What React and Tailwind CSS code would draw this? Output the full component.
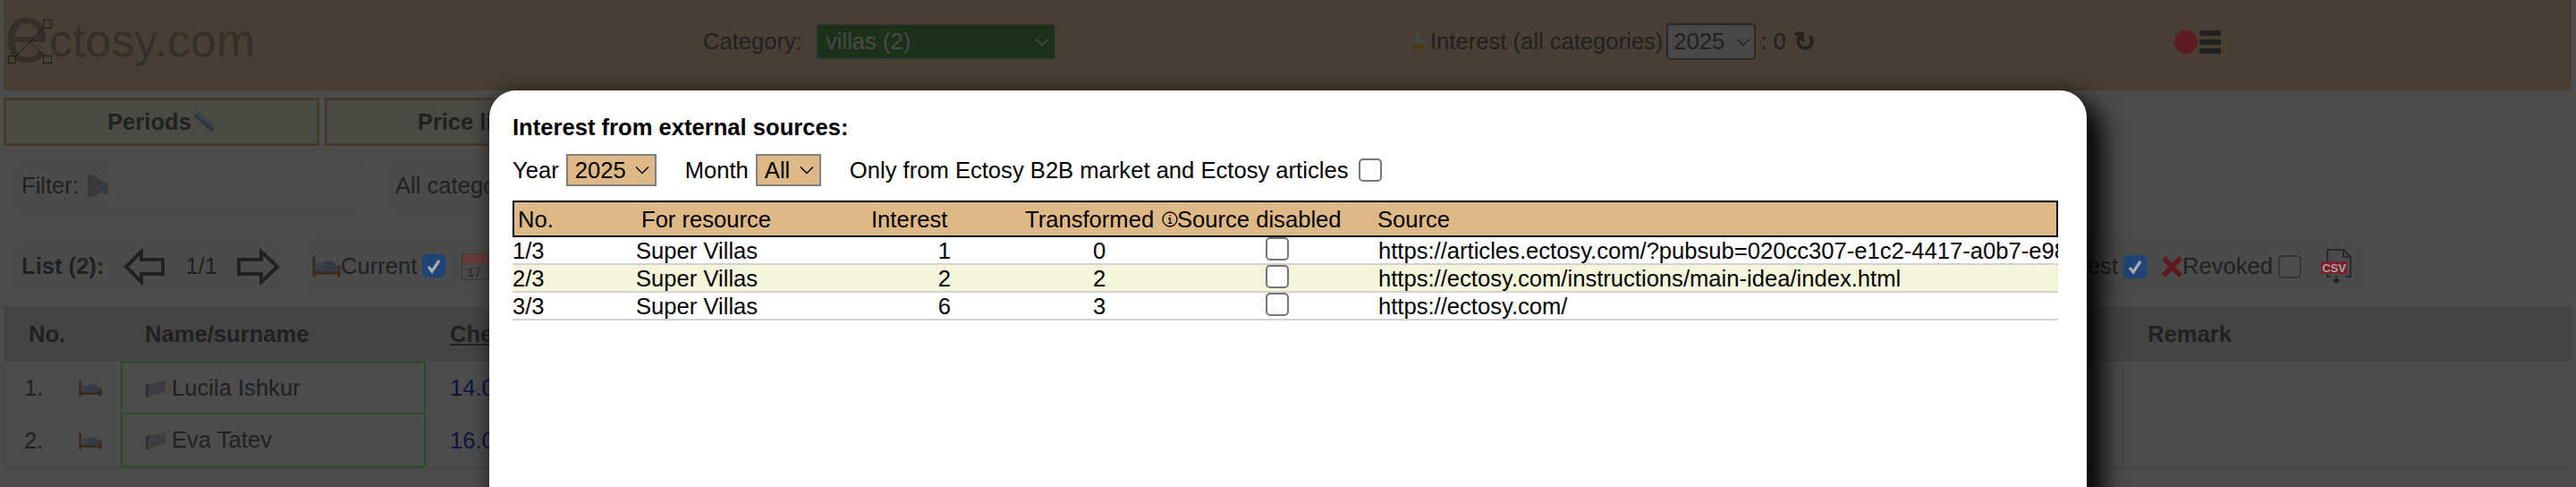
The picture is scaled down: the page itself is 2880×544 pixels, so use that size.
const rows = [
  { no: '1/3', interest: 1, transformed: 0, source: 'https://articles.ectosy.com/?pubsub=020cc307-e1c2-4417-a0b7-e98f1b2c7d10' },
  { no: '2/3', interest: 2, transformed: 2, source: 'https://ectosy.com/instructions/main-idea/index.html', alt: true },
  { no: '3/3', interest: 6, transformed: 3, source: 'https://ectosy.com/' },
]

const guests = [
  { no: '1.', name: 'Lucila Ishkur', date: '14.06.2025', nameCell: 'border-2' },
  { no: '2.', name: 'Eva Tatev', date: '16.06.2025', nameCell: 'border-x-2 border-b-2' },
]

function Select({ label, className }) {
  return (
    <div className={`flex items-center justify-between ${className}`}>
      <span>{label}</span>
      <svg width="16" height="10" viewBox="0 0 16 10" fill="none" stroke="currentColor" strokeWidth="1.4">
        <path d="M1 1.5l7 7 7-7" />
      </svg>
    </div>
  )
}

function Checkbox({ className = 'border-[#767676] bg-white' }) {
  return <span className={`block h-[26px] w-[26px] shrink-0 rounded-[5px] border-2 ${className}`} />
}

// emoji-like icons sit above the scrim, they stay brighter than it in the picture
function CheckedBox() {
  return (
    <span className="relative z-10 flex h-[26px] w-[26px] shrink-0 items-center justify-center rounded-[5px] bg-[#1f4578]">
      <svg width="20" height="20" viewBox="0 0 20 20" fill="none" stroke="#ababab" strokeWidth="3.2">
        <path d="M4 11l4 5 8-12" />
      </svg>
    </span>
  )
}

function Bed({ className }) {
  return (
    <svg className={`relative z-10 ${className}`} viewBox="0 0 32 24" preserveAspectRatio="none">
      <path d="M2 1v23M30 11v13" stroke="#3a2a20" strokeWidth="3" fill="none" />
      <path d="M1 19.5h30" stroke="#3a2a20" strokeWidth="4" fill="none" />
      <path d="M8 18c1-10 8-13 13-11 5 1 8 5 8 11z" fill="#323b44" />
      <path d="M3 10c2-2 6-2 9 0l-1 7H3z" fill="#3e4043" />
    </svg>
  )
}

function Folder({ className }) {
  return (
    <svg className={`relative z-10 ${className}`} viewBox="0 0 22 28" preserveAspectRatio="none">
      <path d="M0 7l5-1v21l-5 1z" fill="#2e3033" />
      <path d="M3 8l19-7v19L2 27z" fill="#3c3e41" />
    </svg>
  )
}

function Pencil() {
  return (
    <svg className="relative z-10 ml-[2px]" width="25" height="24" viewBox="0 0 25 24">
      <path d="M5 0L25 17l-4 7L0 5z" fill="#2f363d" />
      <path d="M5 0L25 17l-2 3L2 3z" fill="#3b444c" />
    </svg>
  )
}

function Logo() {
  return (
    <div className="relative w-[782px] self-start text-[#b0a08a]">
      <div className="flex items-start pl-[1px]">
        <span className="mt-[-7px] text-[90px] leading-[90px]">e</span>
        <span className="mt-[17px] text-[52px] leading-[56px]">ctosy.com</span>
      </div>
      <svg className="absolute left-0 top-0" width="60" height="75" viewBox="0 0 60 75" fill="none" stroke="#555" strokeWidth="1">
        <rect x="44.5" y="22.5" width="9" height="9" />
        <rect x="5.5" y="62.5" width="8" height="8" />
        <rect x="44.5" y="62.5" width="9" height="8" />
        <path d="M45 31L13 63M30 47l16 16" />
      </svg>
    </div>
  )
}

function Dimmed() {
  return (
    <div className="flex h-[544px] flex-col bg-white text-[25.6px] text-[#707070]">
      <header className="ml-[4px] mr-[5px] flex h-[101px] shrink-0 items-center bg-[#f0cfaa] pb-[8px]">
        <Logo />
        <span>Category:</span>
        <Select label="villas (2)" className="ml-[15px] h-[41px] w-[269px] border-2 border-[#c4c4c4] bg-[#5aa855] pl-[9px] pr-[6px] text-[#f2f2f2]" />
        <svg className="relative z-10 ml-[393px]" width="23" height="24" viewBox="0 0 24 24">
          <defs>
            <linearGradient id="star" x1="0" y1="0" x2="0" y2="1">
              <stop offset="0.45" stopColor="#44484a" />
              <stop offset="0.65" stopColor="#4a3e1a" />
            </linearGradient>
          </defs>
          <path d="M12 0l3 9h9l-7 6 3 9-8-5-8 5 3-9-7-6h9z" fill="url(#star)" />
        </svg>
        <span className="ml-[2px]">Interest (all categories)</span>
        <Select label="2025" className="ml-[4px] h-[41px] w-[100px] rounded-[5px] border-2 border-[#8a8a8a] bg-[#f2f2f2] pl-[6px] pr-[4px]" />
        <span className="ml-[5px]">: 0</span>
        <span className="ml-[8px] text-[30px] font-bold">↻</span>
        <span className="relative z-10 ml-auto h-[26px] w-[26px] rounded-full bg-[#5e1c20]" />
        <span className="ml-[2px] mr-[392px] flex h-[26px] w-[24px] flex-col justify-between">
          <span className="h-[6px] bg-[#707070]" />
          <span className="h-[6px] bg-[#707070]" />
          <span className="h-[6px] bg-[#707070]" />
        </span>
      </header>

      <nav className="mx-[4px] mt-[8px] flex h-[54px] shrink-0 gap-[6px] font-bold">
        <div className="flex w-[353px] items-center justify-center border-[3px] border-[#e0c39c] bg-[#f7fae0]">
          <span>Periods</span>
          <Pencil />
        </div>
        <div className="flex w-[353px] items-center justify-center border-[3px] border-[#e0c39c] bg-[#f7fae0] pr-[12px]">
          <span>Price list</span>
          <Pencil />
        </div>
      </nav>

      <div className="ml-[14px] mt-[10px] flex h-[69px] shrink-0 gap-[21px]">
        <div className="flex w-[397px] items-center rounded-[10px] bg-[#fafafa] pl-[10px]">
          <span>Filter:</span>
          <svg className="relative z-10 ml-[10px]" width="24" height="28" viewBox="0 0 24 28">
            <path d="M0 3c2-3 4-3 5-2l13 8v10L5 26c-2 2-4 1-5-2z" fill="#38393c" />
            <rect x="17" y="10" width="6" height="13" fill="#343b41" />
          </svg>
          <span className="h-[36px] w-[282px] bg-white" />
        </div>
        <div className="flex w-[600px] items-center rounded-[10px] bg-[#fafafa] pl-[10px]">All categories</div>
      </div>

      <div className="ml-[14px] mt-[21px] flex h-[69px] shrink-0 gap-[24px]">
        <div className="flex w-[302px] items-center rounded-[10px] bg-[#fafafa] pl-[10px]">
          <span className="font-bold">List (2):</span>
          <svg className="ml-[22px]" width="46" height="40" viewBox="0 0 46 40" fill="none" stroke="#707070" strokeWidth="4">
            <path d="M44 12H20V3L3 20l17 17v-9h24z" />
          </svg>
          <span className="ml-[23px]">1/1</span>
          <svg className="ml-[22px]" width="48" height="40" viewBox="0 0 48 40" fill="none" stroke="#707070" strokeWidth="4">
            <path d="M2 12h25V3l18 17-18 17v-9H2z" />
          </svg>
        </div>
        <div className="flex w-[2302px] items-center justify-between rounded-[10px] bg-[#fafafa] pl-[9px] pr-[10px]">
          <div className="flex items-center">
            <Bed className="h-[24px] w-[32px]" />
            <span>Current</span>
            <span className="ml-[6px]"><CheckedBox /></span>
            <svg className="relative z-10 ml-[18px]" width="30" height="32" viewBox="0 0 30 32">
              <rect x="0.5" y="3" width="29" height="28" fill="#4a4a4a" stroke="#333" />
              <rect x="0.5" y="3" width="29" height="10" fill="#6a3a3a" />
              <text x="14" y="28" fontSize="15" fill="#2a2a2a" textAnchor="middle">17</text>
            </svg>
          </div>
          <div className="flex items-center">
            <span>Interest</span>
            <span className="ml-[6px]"><CheckedBox /></span>
            <svg className="relative z-10 ml-[17px]" width="23" height="24" viewBox="0 0 23 24" fill="none" stroke="#5e1a20" strokeWidth="5.5">
              <path d="M2 2l19 20M21 2L2 22" />
            </svg>
            <span>Revoked</span>
            <span className="ml-[6px]"><Checkbox className="border-[#b0b0b0] bg-white" /></span>
            <svg className="relative z-10 ml-[22px]" width="37" height="40" viewBox="0 0 37 40" fill="none">
              <path d="M7 14V1h18l8 8v22h-5M7 27v4h4M25 1v8h8" stroke="#2a2a2a" strokeWidth="2" />
              <path d="M18 30v4h4l-5 5-5-5h4v-4z" fill="#222" />
              <rect x="0" y="14" width="29" height="14" fill="#7a2028" />
              <text x="14.5" y="26" fontSize="13" fontWeight="700" fill="#a6a6a6" textAnchor="middle">CSV</text>
            </svg>
          </div>
        </div>
      </div>

      <div className="ml-[4px] mr-[5px] mt-[10px] grid shrink-0 grid-cols-[131px_341px_1fr_502px] border-b-2 border-[#eeeeee]">
        <div className="flex h-[62px] items-center bg-[#e3e3e3] pl-[28px] font-bold">No.</div>
        <div className="flex h-[62px] items-center bg-[#e3e3e3] pl-[27px] font-bold">Name/surname</div>
        <div className="flex h-[62px] items-center bg-[#e3e3e3] pl-[27px] font-bold underline">Check-in</div>
        <div className="flex h-[62px] items-center border-l-2 border-[#eeeeee] bg-[#e3e3e3] pl-[26px] font-bold">Remark</div>
        {guests.map(guest => (
          <div key={guest.no} className="col-span-4 grid h-[59px] grid-cols-[131px_341px_1fr_502px] bg-[#fdfeff]">
            <div className="flex items-center border-l-2 border-[#eeeeee] pl-[21px]">
              <span className="w-[61px]">{guest.no}</span>
              <Bed className="h-[19px] w-[26px]" />
            </div>
            <div className={`flex items-center border-[#8cff85] pl-[26px] ${guest.nameCell}`}>
              <Folder className="h-[20px] w-[22px]" />
              <span className="ml-[7px]">{guest.name}</span>
            </div>
            <div className="flex items-center pl-[27px] text-[#3c46e0]">{guest.date}</div>
            <div className="border-l-2 border-[#eeeeee]" />
          </div>
        ))}
      </div>
    </div>
  )
}

function InterestModal() {
  return (
    <div className="absolute left-[547px] top-[101px] z-20 h-[600px] w-[1786px] rounded-[30px] bg-white pl-[26px] pr-[32px] pt-[26px] text-[25.6px] text-black shadow-[16px_16px_30px_#000,0_0_20px_rgba(0,0,0,0.4)]">
      <h2 className="font-bold leading-[30px]">Interest from external sources:</h2>

      <div className="mt-[15px] flex h-[36px] items-center">
        <span>Year</span>
        <Select label="2025" className="ml-[8px] h-[36px] w-[101px] border-2 border-[#808080] bg-[#deb887] pl-[8px] pr-[6px]" />
        <span className="ml-[32px]">Month</span>
        <Select label="All" className="ml-[8px] h-[36px] w-[73px] border-2 border-[#808080] bg-[#deb887] pl-[8px] pr-[6px]" />
        <span className="ml-[32px]">Only from Ectosy B2B market and Ectosy articles</span>
        <span className="ml-[12px]"><Checkbox /></span>
      </div>

      <div className="mt-[16px] w-[1728px] overflow-hidden">
        <div className="grid h-[41px] grid-cols-[136px_249px_103px_253px_224px_1fr] items-center border-2 border-black bg-[#deb887] pb-[2px]">
          <span className="pl-[4px]">No.</span>
          <span className="pl-[6px]">For resource</span>
          <span className="pl-[14px]">Interest</span>
          <span className="pl-[83px]">Transformed</span>
          <span className="flex items-center">
            <svg className="ml-[-17px] mr-[-1px]" width="18" height="18" viewBox="0 0 18 18" fill="none" stroke="#000" strokeWidth="1.3">
              <circle cx="9" cy="9" r="8" />
              <path d="M9 4v1.6M7 8h2.2v5.2M7 13.4h4.4" />
            </svg>
            Source disabled
          </span>
          <span>Source</span>
        </div>
        {rows.map(row => (
          <div
            key={row.no}
            className={`grid h-[31px] grid-cols-[138px_249px_103px_253px_224px_1fr] items-start whitespace-nowrap border-b-2 border-[#d3d3d3] leading-[29px] ${row.alt ? 'bg-[#f5f5dc]' : 'bg-white'}`}
          >
            <span className="pt-[1px]">{row.no}</span>
            <span className="pt-[1px]">Super Villas</span>
            <span className="pt-[1px] text-right">{row.interest}</span>
            <span className="pl-[159px] pt-[1px]">{row.transformed}</span>
            <span className="flex justify-center"><Checkbox /></span>
            <span className="pl-[1px] pt-[1px]">{row.source}</span>
          </div>
        ))}
      </div>
    </div>
  )
}

export default function App() {
  return (
    <div className="relative h-[544px] overflow-hidden font-['Liberation_Sans',Arial,sans-serif]">
      <Dimmed />
      <div className="absolute inset-0 bg-black/70" />
      <InterestModal />
    </div>
  )
}
